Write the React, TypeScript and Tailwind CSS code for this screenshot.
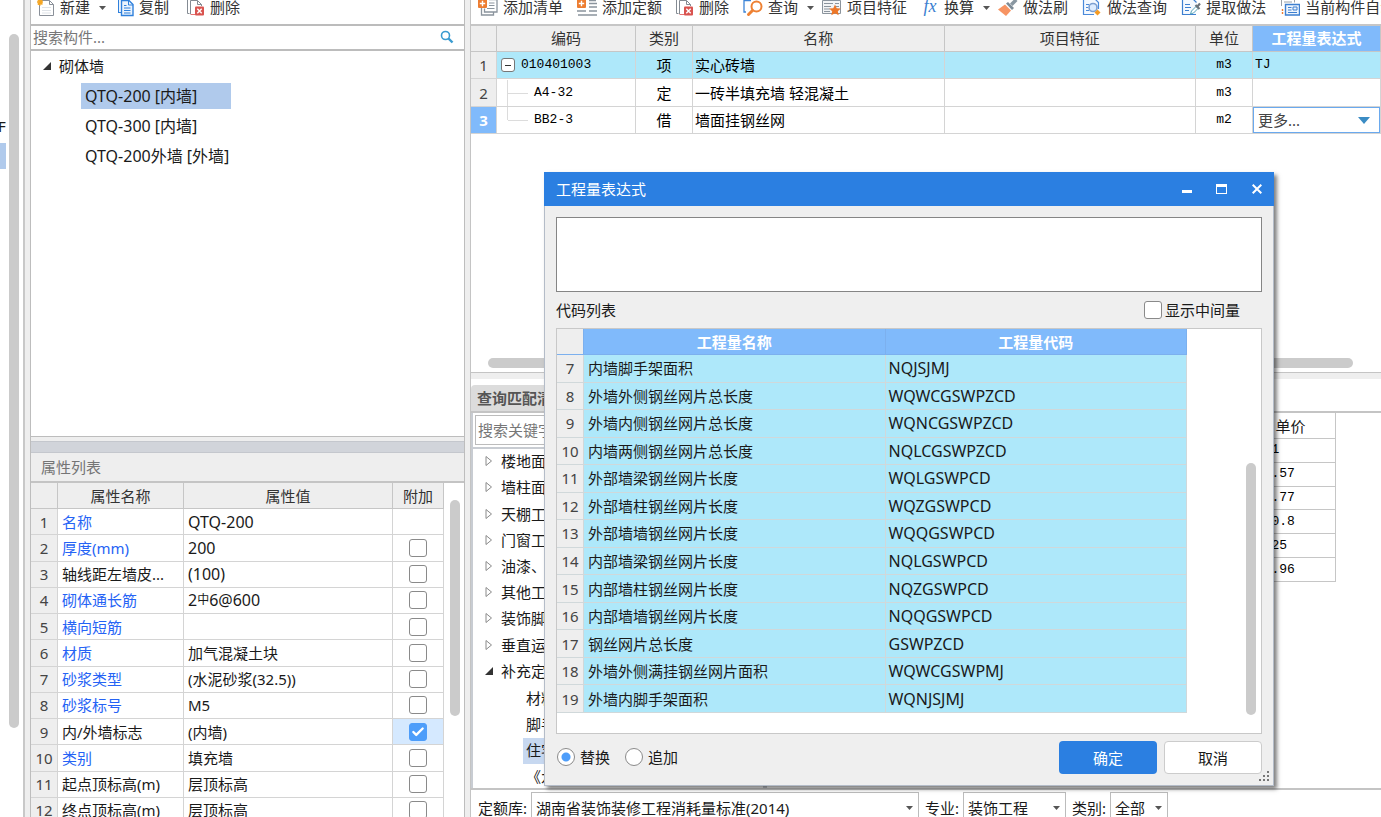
import { useState, type ReactNode } from 'react'
import { Check } from 'lucide-react'

const MONO = "font-['Liberation_Mono','Noto_Sans_CJK_SC',monospace] text-[13px]"

const PROPS = [
  { name: '名称', value: 'QTQ-200', blue: true, box: false },
  { name: '厚度(mm)', value: '200', blue: true, box: true },
  { name: '轴线距左墙皮...', value: '(100)', blue: false, box: true },
  { name: '砌体通长筋', value: <>2<span className="align-[2px] text-xs">中</span>6@600</>, blue: true, box: true },
  { name: '横向短筋', value: '', blue: true, box: true },
  { name: '材质', value: '加气混凝土块', blue: true, box: true },
  { name: '砂浆类型', value: '(水泥砂浆(32.5))', blue: true, box: true },
  { name: '砂浆标号', value: 'M5', blue: true, box: true },
  { name: '内/外墙标志', value: '(内墙)', blue: false, box: true },
  { name: '类别', value: '填充墙', blue: true, box: true },
  { name: '起点顶标高(m)', value: '层顶标高', blue: false, box: true },
  { name: '终点顶标高(m)', value: '层顶标高', blue: false, box: true },
]

const CODES = [
  ['内墙脚手架面积', 'NQJSJMJ'],
  ['外墙外侧钢丝网片总长度', 'WQWCGSWPZCD'],
  ['外墙内侧钢丝网片总长度', 'WQNCGSWPZCD'],
  ['内墙两侧钢丝网片总长度', 'NQLCGSWPZCD'],
  ['外部墙梁钢丝网片长度', 'WQLGSWPCD'],
  ['外部墙柱钢丝网片长度', 'WQZGSWPCD'],
  ['外部墙墙钢丝网片长度', 'WQQGSWPCD'],
  ['内部墙梁钢丝网片长度', 'NQLGSWPCD'],
  ['内部墙柱钢丝网片长度', 'NQZGSWPCD'],
  ['内部墙墙钢丝网片长度', 'NQQGSWPCD'],
  ['钢丝网片总长度', 'GSWPZCD'],
  ['外墙外侧满挂钢丝网片面积', 'WQWCGSWPMJ'],
  ['外墙内脚手架面积', 'WQNJSJMJ'],
]

const CHAPTERS = ['楼地面', '墙柱面', '天棚工', '门窗工', '油漆、', '其他工', '装饰脚', '垂直运']
const PRICES = ['   1', '   .57', '   .77', '   0.8', '   25', '   .96']

export default function App() {
  return (
    <div className="relative flex h-screen overflow-hidden bg-[#eeeeee] font-['Noto_Sans','Noto_Sans_CJK_SC',sans-serif] text-[15px] leading-5 text-[#1a1a1a]">
      <NavStrip />
      <div className="ml-[5px] flex w-[435px] shrink-0 flex-col border-x border-[#bdbdbd]">
        <ComponentPanel />
        <PropertyPanel />
      </div>
      <div className="ml-[5px] flex min-w-0 flex-1 flex-col border-l border-[#c4c4c4]">
        <QuantityPanel />
        <QueryPanel />
      </div>
      <ExpressionDialog />
    </div>
  )
}

function NavStrip() {
  return (
    <div className="flex w-[25px] shrink-0 justify-between border-r-2 border-[#c8c8c8] bg-white">
      <div className="w-1.5 overflow-hidden pt-[116px]">
        <div className="-ml-0.5">F</div>
        <div className="mt-[7px] h-[26px] bg-[#b0caec]" />
      </div>
      <div className="mr-1 mt-[34px] h-[694px] w-2.5 rounded-full bg-[#cbcbcb]" />
    </div>
  )
}

function ToolButton({ icon, label, caret }: { icon: ReactNode; label: string; caret?: boolean }) {
  return (
    <button className={`flex h-[15px] shrink-0 items-center whitespace-nowrap leading-[15px] text-[#333] ${caret ? '-mr-1.5' : ''}`}>
      <span className="mr-[5px] pb-0.5">{icon}</span>
      {label}
      {caret && <span className="ml-[9px]"><Caret /></span>}
    </button>
  )
}

function Caret() {
  return <svg width="7" height="4" viewBox="0 0 7 4"><path d="M0 0h7L3.5 4z" fill="#555" /></svg>
}

function NewIcon() {
  return (
    <svg width="18" height="20" viewBox="0 0 18 20" fill="none">
      <path d="M2.500 3.500h10l4 4v11h-14z" fill="#fff" stroke="#8a9099" />
      <path d="M12.500 3.500v4h4" stroke="#8a9099" />
      <path d="M5 10.500h9M5 13.500h9M5 16h9" stroke="#dfe3e8" />
      <path d="M3 1.500v7M0 5h6M.8 2.500l4.600 5M5.400 2.500L.8 7.500" stroke="#f5a623" strokeWidth="1.500" />
    </svg>
  )
}

function CopyIcon() {
  return (
    <svg width="16" height="20" viewBox="0 0 16 20" fill="none" stroke="#2f80dc">
      <path d="M3 15.500H.5V2.500h8" strokeWidth="1.200" />
      <path d="M3.500 3.500h7.500l4 4v11H3.500z" fill="#eaf3fd" strokeWidth="1.400" />
      <path d="M10.500 4v4h4.500M6 8.500h2.500M6 11h6.500M6 13.500h6.500M6 16h6.500" />
    </svg>
  )
}

function DeleteIcon() {
  return (
    <svg width="18" height="20" viewBox="0 0 18 20" fill="none" stroke="#848b93">
      <path d="M2.500 16.500h-2V1.500h6" />
      <path d="M8 17.500H3.500" stroke="#e57373" />
      <path d="M3.500 17V3.500h7l4 4V9" fill="#fff" />
      <path d="M10.500 3.500v4h4" />
      <rect x="8" y="9.500" width="9" height="9" rx="1" fill="#d9534f" stroke="none" />
      <path d="M10.300 11.800l4.400 4.400M14.700 11.800l-4.400 4.400" stroke="#fff" strokeWidth="1.400" />
    </svg>
  )
}

function AddListIcon() {
  return (
    <svg width="20" height="20" viewBox="0 0 20 20" fill="none" stroke="#8b949d">
      <path d="M3.500 11v7h12v-3" strokeWidth="1.300" />
      <path d="M6.500 11.500v3.500h12.500v-12.500h-8" fill="#fff" strokeWidth="1.300" />
      <path d="M11 6h5.500M11 8.500h5.500M9 11.500h7.500" />
      <rect x="0" y="2" width="9" height="9" rx="1" fill="#ed7d31" stroke="none" />
      <path d="M4.500 3.800v5.400M1.800 6.500h5.400" stroke="#fff" strokeWidth="1.400" />
    </svg>
  )
}

function AddQuotaIcon() {
  return (
    <svg width="20" height="20" viewBox="0 0 20 20" fill="none" stroke="#8b949d" strokeWidth="1.300">
      <path d="M12 3.500h7M12 6.500h8M12 10h8M12 14h8M0 14h9M1 18h19" />
      <rect x="0" y="2" width="9" height="9" rx="1" fill="#ed7d31" stroke="none" />
      <path d="M4.500 3.800v5.400M1.800 6.500h5.400" stroke="#fff" strokeWidth="1.400" />
    </svg>
  )
}

function QueryIcon() {
  return (
    <svg width="20" height="20" viewBox="0 0 20 20" fill="none">
      <path d="M3 15H1V3.500h7" stroke="#3d85d8" strokeWidth="1.300" />
      <circle cx="13.500" cy="9.500" r="5" stroke="#ee8133" strokeWidth="2" />
      <path d="M9.500 13.500l-4 4" stroke="#ee8133" strokeWidth="3" strokeLinecap="round" />
    </svg>
  )
}

function FeatureIcon() {
  return (
    <svg width="20" height="20" viewBox="0 0 20 20" fill="none" stroke="#8b949d">
      <path d="M.5 3.500h18v13H.5z" fill="#f3f4f5" />
      <path d="M2 6.500h9M2 9.500h7M2 12h6M2 14.500h6M13 6.500h4M13 9.500h4" />
      <path d="M13 7.500l1.700 3.700 4.100.4-3 2.700.9 4-3.700-2.100-3.700 2.100.9-4-3-2.700 4.100-.4z" fill="#ed7627" stroke="none" />
    </svg>
  )
}

function BrushIcon() {
  return (
    <svg width="20" height="20" viewBox="0 0 20 20">
      <path d="M0 12.500l7-5 6 6-5 5.500z" fill="#f79463" />
      <path d="M8 6.500L10 5l6 6-2 2z" fill="#7d8b96" />
      <path d="M12 6.500l5-5L19.500 4l-5 5z" fill="#8997a1" />
    </svg>
  )
}

function MethodQueryIcon() {
  return (
    <svg width="20" height="20" viewBox="0 0 20 20" fill="none" stroke="#4a8ada">
      <path d="M12 17.500H1.500V1.500h11l4 4V12" fill="#f4f9ff" strokeWidth="1.200" />
      <path d="M4 7.500h3M4 10.500h2M4 13.500h3" />
      <circle cx="11" cy="10.500" r="4" fill="#dcecff" stroke="#7c9fd0" strokeWidth="1.600" />
      <path d="M15.500 12.500l3 3-3 3-3-3z" fill="#f59b23" stroke="none" />
    </svg>
  )
}

function ExtractIcon() {
  return (
    <svg width="20" height="20" viewBox="0 0 20 20" fill="none" stroke="#3d7fd0">
      <path d="M15 17.500H1.500v-16h10l4 4" fill="#f4f9ff" strokeWidth="1.200" />
      <path d="M4 7.500h5M4 10.500h6M4 13.500h4" />
      <path d="M9.500 17l1-3 4.500-4.500 2 2-4.500 4.500z" stroke="#56a3b8" fill="#fff" />
      <path d="M14.500 8l4 4M16 10l3-3.500" stroke="#6b747c" strokeWidth="2.200" />
    </svg>
  )
}

function CurrentIcon() {
  return (
    <svg width="20" height="20" viewBox="0 0 20 20" fill="none">
      <path d="M1.500 9V2.500h13v3M4 5h8" stroke="#9aa1a8" />
      <path d="M2.500 12v5" stroke="#ed7d31" strokeWidth="1.400" strokeDasharray="2 1" />
      <path d="M5.500 7.500h14v10.500h-14z" fill="#eef5fd" stroke="#3d7fd0" strokeWidth="1.400" />
      <path d="M8 10.500h3.500M8 13h3.500M8 15.500h9M13 10h4v3h-4z" stroke="#3d7fd0" />
    </svg>
  )
}

function Expanded() {
  return <svg width="8" height="8" viewBox="0 0 8 8"><path d="M8 0v8H0z" fill="#333" /></svg>
}

function Collapsed() {
  return <svg width="8" height="12" viewBox="0 0 8 12"><path d="M1 1.500L6.500 6 1 10.500z" fill="#fff" stroke="#8a8a8a" /></svg>
}

function ComponentPanel() {
  return (
    <div className="flex h-[437px] shrink-0 flex-col border-b border-[#bdbdbd] bg-white">
      <div className="flex h-6 shrink-0 items-start gap-[18px] pl-1.5">
        <ToolButton icon={<NewIcon />} label="新建" caret />
        <ToolButton icon={<CopyIcon />} label="复制" />
        <ToolButton icon={<DeleteIcon />} label="删除" />
      </div>
      <div className="flex h-[27px] shrink-0 items-center border-y-2 border-[#bcbcbc] pb-px pl-0.5 pr-2.5">
        <input aria-label="搜索构件" placeholder="搜索构件..." className="min-w-0 flex-1 outline-none placeholder:text-[#777]" />
        <button aria-label="搜索">
          <svg width="14" height="14" viewBox="0 0 14 14" fill="none" stroke="#3a9bd0">
            <circle cx="5.500" cy="5.500" r="4" strokeWidth="1.600" />
            <path d="M8.500 8.500l4 4" strokeWidth="2.400" />
          </svg>
        </button>
      </div>
      <ul>
        <li className="flex h-[30px] items-center gap-2 pb-px pl-3"><Expanded />砌体墙</li>
        {['QTQ-200 [内墙]', 'QTQ-300 [内墙]', 'QTQ-200外墙 [外墙]'].map((t, i) => (
          <li key={t} className="flex h-[30px] items-center pl-[50px]">
            <span className={`flex h-[26px] w-[150px] items-center whitespace-nowrap pb-px pl-1 text-base leading-5 ${i === 0 ? 'bg-[#b0caec]' : ''}`}>{t}</span>
          </li>
        ))}
      </ul>
    </div>
  )
}

function Tick({ label, defaultChecked }: { label: string; defaultChecked?: boolean }) {
  return (
    <span className="relative inline-flex size-[18px] align-middle">
      <input type="checkbox" aria-label={label} defaultChecked={defaultChecked}
        className="peer size-[18px] appearance-none rounded-[3px] border border-[#8a8a8a] bg-white checked:border-[#4d9dfa] checked:bg-[#4d9dfa]" />
      <Check size={14} strokeWidth={4} className="pointer-events-none absolute left-0.5 top-0.5 hidden text-white peer-checked:block" />
    </span>
  )
}

function PropertyPanel() {
  return (
    <div className="mt-1 flex min-h-0 flex-1 flex-col">
      <div className="h-3 shrink-0 border-y border-[#c4c7cd] bg-[#d1d4da]" />
      <h2 className="flex h-7 shrink-0 items-center pl-2.5 text-[#757575]">属性列表</h2>
      <div className="flex min-h-0 flex-1 items-start justify-between overflow-hidden border-t-2 border-[#c4c4c4] bg-white">
        <table className="h-[341px] w-[413px] table-fixed border-separate border-spacing-0">
          <thead>
            <tr className="h-[26px] text-[#333] *:border-b *:border-r *:border-[#c6c6c6] *:bg-[#eeeeee] *:p-0 *:font-normal">
              <th className="w-[27px]" /><th className="w-[126px]">属性名称</th><th>属性值</th><th className="w-[51px]">附加</th>
            </tr>
          </thead>
          <tbody>
            {PROPS.map((p, i) => (
              <tr key={i} className="*:border-b *:border-r *:border-[#d4d4d4] *:p-0">
                <td className="bg-[#eeeeee] text-center text-[#444]">{i + 1}</td>
                <td className={`whitespace-nowrap ${p.blue ? 'text-[#2563f5]' : ''}`}><span className="pl-1">{p.name}</span></td>
                <td className={`whitespace-nowrap ${i < 4 ? 'text-base leading-5' : ''}`}><span className="pl-1">{p.value}</span></td>
                <td className={`text-center leading-[0] ${i === 8 ? 'bg-[#d5e9ff]' : ''}`}>
                  {p.box && <Tick label={`附加 ${p.name}`} defaultChecked={i === 8} />}
                </td>
              </tr>
            ))}
          </tbody>
        </table>
        <div className="mr-1 mt-[17px] h-[216px] w-2.5 rounded-full bg-[#cbcbcb]" />
      </div>
    </div>
  )
}

function QuantityPanel() {
  const numCell = 'bg-[#eeeeee] text-center text-[#444]'
  return (
    <div className="flex h-[373px] shrink-0 flex-col border-b border-[#c4c4c4] bg-white">
      <div className="flex h-6 shrink-0 items-start gap-3.5 overflow-x-clip pl-[7px]">
        <ToolButton icon={<AddListIcon />} label="添加清单" />
        <ToolButton icon={<AddQuotaIcon />} label="添加定额" />
        <ToolButton icon={<DeleteIcon />} label="删除" />
        <ToolButton icon={<QueryIcon />} label="查询" caret />
        <ToolButton icon={<FeatureIcon />} label="项目特征" />
        <ToolButton icon={<i className="block w-[18px] font-['Liberation_Serif',serif] text-lg leading-[15px] text-[#3d7fd0]">fx</i>} label="换算" caret />
        <ToolButton icon={<BrushIcon />} label="做法刷" />
        <ToolButton icon={<MethodQueryIcon />} label="做法查询" />
        <ToolButton icon={<ExtractIcon />} label="提取做法" />
        <ToolButton icon={<CurrentIcon />} label="当前构件自动" />
      </div>
      <table className="w-full table-fixed border-separate border-spacing-0 border-t-2 border-[#c6c6c6]">
        <thead>
          <tr className="h-[26px] text-[#333] *:border-b *:border-r *:border-[#c6c6c6] *:px-0 *:pb-0.5 *:pt-0 *:font-normal">
            <th className="w-[26px] bg-[#eeeeee]" />
            <th className="w-[139px] bg-[#eeeeee]">编码</th>
            <th className="w-[57px] bg-[#eeeeee]">类别</th>
            <th className="bg-[#eeeeee]">名称</th>
            <th className="bg-[#eeeeee]">项目特征</th>
            <th className="w-[57px] bg-[#eeeeee]">单位</th>
            <th className="w-32 bg-[#80bafb] text-white"><b>工程量表达式</b></th>
          </tr>
        </thead>
        <tbody>
          <tr className="h-[27px] bg-[#aee8fa] text-black *:border-b *:border-r *:border-[#d4d4d4] *:p-0">
            <td className={numCell}>1</td>
            <td className={MONO}>
              <div className="flex items-center pl-1">
                <button aria-label="折叠" className="flex size-3.5 items-center justify-center rounded-[3px] border border-[#777] bg-white">
                  <span className="h-px w-1.5 bg-[#333]" />
                </button>
                <span className="ml-1.5">010401003</span>
              </div>
            </td>
            <td className="text-center">项</td>
            <td><span className="pl-0.5">实心砖墙</span></td>
            <td />
            <td className={`${MONO} text-center`}>m3</td>
            <td className={MONO}><span className="pl-0.5">TJ</span></td>
          </tr>
          <tr className="h-7 text-black *:border-b *:border-r *:border-[#d4d4d4] *:p-0">
            <td className={numCell}>2</td>
            <td className={MONO}><Branch>A4-32</Branch></td>
            <td className="text-center">定</td>
            <td className="whitespace-nowrap"><span className="pl-0.5">一砖半填充墙 轻混凝土</span></td>
            <td />
            <td className={`${MONO} text-center`}>m3</td>
            <td />
          </tr>
          <tr className="h-[27px] text-black *:border-b *:border-r *:border-[#d4d4d4] *:p-0">
            <td className="bg-[#80bafb] text-center font-bold text-white">3</td>
            <td className={MONO}><Branch last>BB2-3</Branch></td>
            <td className="text-center">借</td>
            <td><span className="pl-0.5">墙面挂钢丝网</span></td>
            <td />
            <td className={`${MONO} text-center`}>m2</td>
            <td>
              <div className="relative">
                <select aria-label="工程量表达式" className="block h-[26px] w-full appearance-none border border-[#6aa9ee] bg-white pl-1 text-[#444]">
                  <option>更多...</option>
                </select>
                <svg className="pointer-events-none absolute right-2.5 top-2.5" width="12" height="7" viewBox="0 0 12 7"><path d="M0 0h12L6 7z" fill="#3b8cc4" /></svg>
              </div>
            </td>
          </tr>
        </tbody>
      </table>
      <div className="mb-1 ml-[17px] mr-7 mt-auto h-2.5 rounded-full bg-[#cbcbcb]" />
    </div>
  )
}

function Branch({ children, last }: { children: string; last?: boolean }) {
  return (
    <div className="flex h-[26px] pl-2.5">
      <span className={`w-px bg-[#dcdcdc] ${last ? 'h-[13px]' : ''}`} />
      <span className="mr-1.5 mt-[13px] h-px w-5 bg-[#dcdcdc]" />
      <span className="self-center">{children}</span>
    </div>
  )
}

function QueryPanel() {
  return (
    <div className="mt-1.5 flex min-h-0 flex-1 flex-col bg-white">
      <div className="flex h-[32px] shrink-0 items-end">
        <button className="h-[26px] w-28 rounded-t bg-[#dcdcdc] pl-1.5 text-left font-bold text-[#555]">查询匹配清</button>
      </div>
      <div className="flex min-h-0 flex-1 overflow-hidden border-y-2 border-[#c4c4c4]">
        <div className="w-[296px] shrink-0 border-l-2 border-r-4 border-[#c8ccd2]">
          <div className="border-b-2 border-[#c8ccd2] p-0.5">
            <input aria-label="搜索关键字" placeholder="搜索关键字" className="block h-[30px] w-full border border-[#bcbcbc] pl-0.5 outline-none placeholder:text-[#777]" />
          </div>
          <ul className="grid h-[341px] auto-rows-fr">
            {CHAPTERS.map(c => (
              <li key={c} className="flex items-center gap-2 pb-0.5 pl-3 *:shrink-0"><Collapsed />{c}</li>
            ))}
            <li className="flex items-center gap-2 pb-0.5 pl-3"><Expanded />补充定</li>
            {['材料', '脚手', '住宅'].map(c => (
              <li key={c} className="flex items-center pl-[50px]">
                <span className={`flex h-[26px] w-20 items-center pb-px pl-[3px] ${c === '住宅' ? 'bg-[#c7d8f0]' : ''}`}>{c}</span>
              </li>
            ))}
            <li className="flex items-center pl-[53px]">《水</li>
          </ul>
        </div>
        <div className="min-w-0 flex-1 pr-[45px]">
          <table className="h-[169px] w-full table-fixed border-separate border-spacing-0">
            <thead>
              <tr className="h-[26px] *:border-b *:border-r *:border-[#c6c6c6] *:p-0 *:font-normal">
                <th /><th className="w-[90px]">单价</th>
              </tr>
            </thead>
            <tbody className={`${MONO} text-black`}>
              {PRICES.map(p => (
                <tr key={p} className="*:border-b *:border-r *:border-[#c6c6c6] *:p-0">
                  <td /><td className="whitespace-pre"><span className="pl-0.5">{p}</span></td>
                </tr>
              ))}
            </tbody>
          </table>
        </div>
      </div>
      <div className="flex h-[27px] shrink-0 items-start overflow-hidden pl-[7px] pt-0.5">
        <Picker id="lib" label="定额库:" value="湖南省装饰装修工程消耗量标准(2014)" width="w-[388px]" />
        <Picker id="major" label="专业:" value="装饰工程" width="w-[103px]" />
        <Picker id="kind" label="类别:" value="全部" width="w-[58px]" />
      </div>
    </div>
  )
}

function Picker({ id, label, value, width }: { id: string; label: string; value: string; width: string }) {
  return (
    <div className="mr-1.5 flex shrink-0 items-center">
      <label htmlFor={id} className="mr-1">{label}</label>
      <div className={`relative ${width}`}>
        <select id={id} className="block h-8 w-full appearance-none border border-[#bcbcbc] bg-white pl-1">
          <option>{value}</option>
        </select>
        <span className="pointer-events-none absolute right-1.5 top-0 flex h-8 items-center"><Caret /></span>
      </div>
    </div>
  )
}

function ExpressionDialog() {
  const [mode, setMode] = useState<'替换' | '追加'>('替换')

  return (
    <div role="dialog" aria-label="工程量表达式"
      className="absolute left-[544px] top-[172px] flex w-[730px] flex-col bg-[#efefef] shadow-[3px_3px_4px_rgba(0,0,0,0.5)]">
      <div className="flex h-[34px] items-center bg-[#2b7fe1] pl-3 text-white">
        <h1 className="flex-1">工程量表达式</h1>
        <button aria-label="最小化" className="flex h-8 w-[35px] items-center justify-center">
          <svg width="10" height="10" viewBox="0 0 10 10"><path d="M0 6h10v3H0z" fill="#fff" /></svg>
        </button>
        <button aria-label="最大化" className="flex h-8 w-[35px] items-center justify-center">
          <svg width="11" height="10" viewBox="0 0 11 10"><path d="M0 0h11v10H0zM1 3v6h9V3z" fill="#fff" fillRule="evenodd" /></svg>
        </button>
        <button aria-label="关闭" className="flex h-8 w-[35px] items-center justify-center">
          <svg width="10" height="10" viewBox="0 0 10 10"><path d="M.7.7l8.600 8.600M9.300.7L.7 9.300" stroke="#fff" strokeWidth="2" /></svg>
        </button>
      </div>
      <div className="border border-t-0 border-[#b4bcc8] px-[11px] pb-[11px] pt-[11px]">
        <textarea aria-label="表达式" className="block h-[75px] w-full resize-none border border-[#858585] bg-white outline-none" />
        <div className="flex h-9 items-center justify-between pr-[22px]">
          <span>代码列表</span>
          <label className="flex items-center gap-[3px]">
            <Tick label="显示中间量" />
            显示中间量
          </label>
        </div>
        <div className="flex h-[406px] items-start justify-between border border-[#c8c8c8] bg-white">
          <table className="h-[384px] w-[630px] table-fixed border-separate border-spacing-0">
            <thead>
              <tr className="h-[26px] text-white *:border-b *:border-r *:border-[#7cb0ee] *:p-0">
                <th className="w-[27px] bg-[#eeeeee]" />
                <th className="bg-[#80bafb]">工程量名称</th>
                <th className="bg-[#80bafb]">工程量代码</th>
              </tr>
            </thead>
            <tbody>
              {CODES.map(([name, code], i) => (
                <tr key={code} className="bg-[#aee8fa] *:border-b *:border-r *:border-[#d0d8da] *:p-0">
                  <td className="bg-[#eeeeee] text-center text-[#444]">{i + 7}</td>
                  <td><span className="pl-1">{name}</span></td>
                  <td className="text-base leading-5"><span className="pl-[3px]">{code}</span></td>
                </tr>
              ))}
            </tbody>
          </table>
          <div className="mr-[5px] mt-[134px] h-[252px] w-2.5 rounded-full bg-[#cbcbcb]" />
        </div>
        <div className="mt-[7px] flex h-[33px] items-center">
          {(['替换', '追加'] as const).map(m => (
            <label key={m} className="mr-3.5 flex items-center gap-[5px] pb-0.5 pl-px">
              <input type="radio" name="mode" checked={mode === m} onChange={() => setMode(m)}
                className="size-[18px] appearance-none rounded-full border border-[#8a8a8a] bg-white checked:bg-[radial-gradient(circle,#4d9dfa_0_4px,#fff_5px)]" />
              {m}
            </label>
          ))}
          <button className="ml-auto h-[33px] w-[98px] rounded bg-[#2b7fe1] text-white">确定</button>
          <button className="ml-[7px] h-[33px] w-[98px] rounded border border-[#cccccc] bg-white">取消</button>
        </div>
      </div>
      <svg className="absolute bottom-1 right-1" width="11" height="11" viewBox="0 0 11 11" fill="#777">
        <path d="M8 0h2v2H8zM4 4h2v2H4zM8 4h2v2H8zM0 8h2v2H0zM4 8h2v2H4zM8 8h2v2H8z" />
      </svg>
    </div>
  )
}
